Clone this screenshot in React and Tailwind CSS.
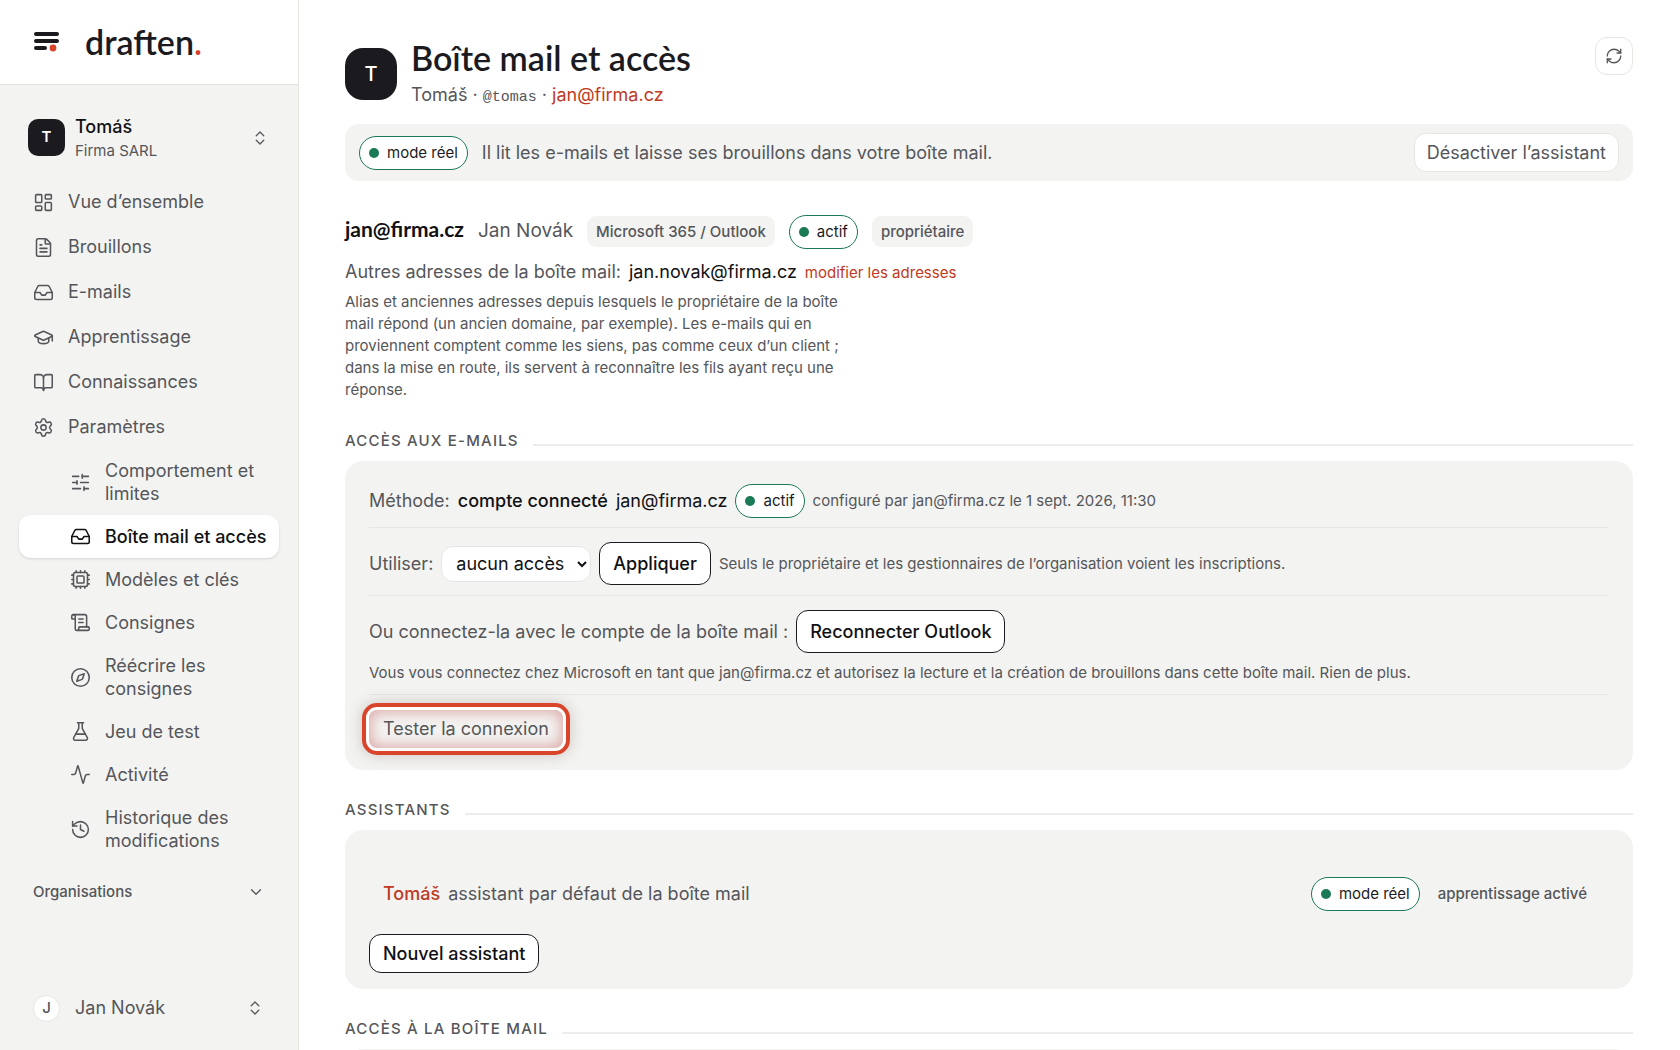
import {
  Activity,
  BookOpen,
  ChevronDown,
  ChevronsUpDown,
  Compass,
  Cpu,
  FileText,
  FlaskConical,
  GraduationCap,
  History,
  Inbox,
  LayoutDashboard,
  RefreshCw,
  ScrollText,
  Settings,
  SlidersHorizontal,
} from "lucide-react"

const mainLinks = [
  { label: "Vue d’ensemble", icon: LayoutDashboard },
  { label: "Brouillons", icon: FileText },
  { label: "E-mails", icon: Inbox },
  { label: "Apprentissage", icon: GraduationCap },
  { label: "Connaissances", icon: BookOpen },
  { label: "Paramètres", icon: Settings },
]

const settingsLinks = [
  { label: "Comportement et limites", icon: SlidersHorizontal },
  { label: "Boîte mail et accès", icon: Inbox, active: true },
  { label: "Modèles et clés", icon: Cpu },
  { label: "Consignes", icon: ScrollText },
  { label: "Réécrire les consignes", icon: Compass },
  { label: "Jeu de test", icon: FlaskConical },
  { label: "Activité", icon: Activity },
  { label: "Historique des modifications", icon: History },
]

function Logo() {
  return (
    <a href="#" className="flex items-center gap-[25px]">
      <svg width="26" height="21" viewBox="0 0 26 21" aria-hidden="true">
        <rect x="0" y="0" width="25" height="4" rx="2" fill="#1b1b1f" />
        <rect x="0" y="7" width="25" height="4" rx="2" fill="#1b1b1f" />
        <rect x="0" y="14" width="13" height="4" rx="2" fill="#1b1b1f" />
        <circle cx="19" cy="16" r="3.4" fill="#d9442b" />
      </svg>
      <span className="font-[Lato,sans-serif] text-[34px] leading-10 font-semibold text-[#1b1b1f]">
        draften<span className="text-[#d9442b]">.</span>
      </span>
    </a>
  )
}

function StatusBadge({ children }) {
  return (
    <span className="inline-flex items-center gap-2 rounded-full border border-[#1a7a56] bg-white px-[9px] py-[5px] text-[15px] leading-[22px] text-[#1b1b1f]">
      <span className="size-[10px] rounded-full bg-[#1a7a56]" />
      {children}
    </span>
  )
}

function Tag({ children }) {
  return (
    <span className="rounded-[9px] bg-[#f3f3f1] px-[9px] py-[5px] text-[15px] leading-[21px] font-medium text-[#55565a]">
      {children}
    </span>
  )
}

function SectionTitle({ children }) {
  return (
    <div className="mt-[30px] mb-[10px] flex items-baseline gap-[14px]">
      <h2 className="text-[15px] leading-5 font-medium tracking-[0.08em] text-[#55565a] uppercase">{children}</h2>
      <span className="h-[2px] flex-1 bg-[#ececea]" />
    </div>
  )
}

function Sidebar() {
  return (
    <aside className="flex w-[299px] shrink-0 flex-col border-r border-[#e6e6e3] bg-[#f3f3f1]">
      <div className="flex h-[85px] items-center border-b border-[#e2e2df] bg-white px-[34px]">
        <Logo />
      </div>

      <button type="button" className="mt-[27px] flex items-center gap-[10px] pr-[29px] pl-7 text-left">
        <span className="flex size-[37px] items-center justify-center rounded-[10px] bg-[#1b1b1f] text-[15px] font-semibold text-white">
          T
        </span>
        <span className="flex-1 pt-[3px]">
          <span className="block text-[18px] leading-6 font-medium text-[#111113]">Tomáš</span>
          <span className="block text-[15px] leading-6 text-[#55565a]">Firma SARL</span>
        </span>
        <ChevronsUpDown size={18} strokeWidth={1.75} className="text-[#55565a]" />
      </button>

      <nav className="mt-[17px] px-[19px]">
        <div className="flex flex-col gap-px">
          {mainLinks.map(({ label, icon: Icon }) => (
            <a
              key={label}
              href="#"
              className="flex items-center gap-[14px] px-[14px] py-[10px] text-[18px] leading-6 text-[#55565a]"
            >
              <Icon size={21} strokeWidth={1.75} className="shrink-0" />
              {label}
            </a>
          ))}
        </div>
        <div className="flex flex-col">
          {settingsLinks.map(({ label, icon: Icon, active }) => (
            <a
              key={label}
              href="#"
              className={
                active
                  ? "flex items-center gap-[14px] rounded-[12px] bg-white py-[10px] pr-2 pl-[51px] text-[18px] leading-[23px] font-medium text-[#111113] shadow-sm"
                  : "flex items-center gap-[14px] py-[10px] pr-2 pl-[51px] text-[18px] leading-[23px] text-[#55565a]"
              }
            >
              <Icon size={21} strokeWidth={1.75} className="shrink-0" />
              {label}
            </a>
          ))}
        </div>
      </nav>

      <button
        type="button"
        className="mt-[18px] flex items-center justify-between pr-[33px] pl-[33px] text-[15px] leading-6 font-medium text-[#55565a]"
      >
        Organisations
        <ChevronDown size={18} strokeWidth={1.75} />
      </button>

      <button
        type="button"
        className="mt-auto mb-7 flex items-center pr-[34px] pl-[33px] text-left text-[18px] leading-7 text-[#55565a]"
      >
        <span className="flex size-[27px] items-center justify-center rounded-full border border-[#e6e6e3] bg-white text-[15px] font-medium">
          J
        </span>
        <span className="ml-[15px] flex-1">Jan Novák</span>
        <ChevronsUpDown size={18} strokeWidth={1.75} />
      </button>
    </aside>
  )
}

function MailAccessCard() {
  return (
    <div className="rounded-[18px] bg-[#f3f3f1] px-6 pt-[9px] pb-[13px] text-[18px] leading-[26px] text-[#55565a]">
      <div className="flex items-center gap-2 border-b border-[#e6e6e3] pt-[14px] pb-[9px]">
        <span>Méthode:</span>
        <span className="font-medium text-[#111113]">compte connecté</span>
        <span className="text-[#111113]">jan@firma.cz</span>
        <StatusBadge>actif</StatusBadge>
        <span className="text-[15px]">configuré par jan@firma.cz le 1 sept. 2026, 11:30</span>
      </div>

      <div className="flex items-center gap-2 border-b border-[#e6e6e3] pt-[14px] pb-[10px]">
        <label htmlFor="access">Utiliser:</label>
        <select
          id="access"
          defaultValue="none"
          className="h-9 w-[150px] rounded-[12px] border border-[#e6e6e3] bg-white pl-[10px] text-[18px] text-[#111113]"
        >
          <option value="none">aucun accès</option>
          <option value="account">compte connecté</option>
        </select>
        <button
          type="button"
          className="h-[43px] rounded-[12px] border border-[#1b1b1f] bg-white px-[13px] font-medium text-[#111113]"
        >
          Appliquer
        </button>
        <span className="text-[15px]">
          Seuls le propriétaire et les gestionnaires de l’organisation voient les inscriptions.
        </span>
      </div>

      <div className="border-b border-[#e6e6e3] pt-[14px] pb-[10px]">
        <div className="flex items-center gap-2">
          <span>Ou connectez-la avec le compte de la boîte mail :</span>
          <button
            type="button"
            className="h-[43px] rounded-[12px] border border-[#1b1b1f] bg-white px-[13px] font-medium text-[#111113]"
          >
            Reconnecter Outlook
          </button>
        </div>
        <p className="mt-[9px] text-[15px] leading-[22px]">
          Vous vous connectez chez Microsoft en tant que jan@firma.cz et autorisez la lecture et la création de
          brouillons dans cette boîte mail. Rien de plus.
        </p>
      </div>

      <div className="pt-[15px] pb-[9px]">
        <button
          type="button"
          className="block h-[38px] rounded-[8px] bg-[#f3f3f1] px-[14px] shadow-[inset_0_0_14px_2px_#dba9a7,0_0_0_3px_#ffffff,0_0_0_7px_#d9442b,0_0_14px_8px_#cfcbc7]"
        >
          Tester la connexion
        </button>
      </div>
    </div>
  )
}

function AssistantsCard() {
  return (
    <div className="rounded-[18px] bg-[#f3f3f1] px-6 pt-[47px] pb-4 text-[18px] leading-[26px] text-[#55565a]">
      <div className="flex items-center justify-between pr-[22px] pl-[14px]">
        <div className="flex items-center gap-2">
          <a href="#" className="font-medium text-[#bf3a22]">
            Tomáš
          </a>
          <span>assistant par défaut de la boîte mail</span>
        </div>
        <div className="flex items-center gap-[18px]">
          <StatusBadge>mode réel</StatusBadge>
          <span className="text-[15px] font-medium">apprentissage activé</span>
        </div>
      </div>
      <button
        type="button"
        className="mt-[23px] h-[39px] rounded-[12px] border border-[#1b1b1f] bg-white px-[13px] font-medium text-[#111113]"
      >
        Nouvel assistant
      </button>
    </div>
  )
}

export default function App() {
  return (
    <div className="flex h-screen overflow-hidden bg-white font-[Inter,sans-serif] text-[18px] text-[#55565a]">
      <Sidebar />
      <main className="min-w-0 flex-1 overflow-y-auto pt-[37px] pr-[47px] pl-[46px] [scrollbar-width:none]">
        <header className="flex items-start justify-between">
          <div className="flex items-center gap-[14px]">
            <span className="flex size-[52px] items-center justify-center rounded-[18px] bg-[#1b1b1f] text-[20px] font-medium text-white">
              T
            </span>
            <div>
              <h1 className="font-[Lato,sans-serif] text-[34px] leading-[42px] font-semibold text-[#1b1b1f]">
                Boîte mail et accès
              </h1>
              <p className="leading-[31px]">
                Tomáš · <span className="font-[Liberation_Mono,monospace] text-[15px] leading-none">@tomas</span> ·{" "}
                <a href="#" className="text-[#bf3a22]">
                  jan@firma.cz
                </a>
              </p>
            </div>
          </div>
          <button
            type="button"
            aria-label="Actualiser"
            className="flex size-[38px] items-center justify-center rounded-[12px] border border-[#e6e6e3] bg-white"
          >
            <RefreshCw size={18} strokeWidth={1.75} />
          </button>
        </header>

        <div className="mt-[14px] flex items-center gap-[14px] rounded-[14px] bg-[#f3f3f1] px-[14px] py-[9px]">
          <StatusBadge>mode réel</StatusBadge>
          <span className="flex-1">Il lit les e-mails et laisse ses brouillons dans votre boîte mail.</span>
          <button type="button" className="h-[39px] rounded-[12px] border border-[#e6e6e3] bg-white px-3">
            Désactiver l’assistant
          </button>
        </div>

        <section className="mt-[34px]">
          <div className="flex items-baseline gap-[14px]">
            <strong className="font-[Lato,sans-serif] text-[21px] leading-7 font-bold text-[#111113]">
              jan@firma.cz
            </strong>
            <span className="text-[19px]">Jan Novák</span>
            <Tag>Microsoft 365 / Outlook</Tag>
            <StatusBadge>actif</StatusBadge>
            <Tag>propriétaire</Tag>
          </div>
          <div className="mt-[10px] flex items-baseline gap-2 leading-[26px]">
            <span>Autres adresses de la boîte mail:</span>
            <span className="text-[#111113]">jan.novak@firma.cz</span>
            <a href="#" className="text-[15px] text-[#bf3a22]">
              modifier les adresses
            </a>
          </div>
          <p className="mt-[5px] max-w-[510px] text-[15px] leading-[22px]">
            Alias et anciennes adresses depuis lesquels le propriétaire de la boîte mail répond (un ancien domaine,
            par exemple). Les e-mails qui en proviennent comptent comme les siens, pas comme ceux d’un client ; dans
            la mise en route, ils servent à reconnaître les fils ayant reçu une réponse.
          </p>
        </section>

        <SectionTitle>Accès aux e-mails</SectionTitle>
        <MailAccessCard />

        <SectionTitle>Assistants</SectionTitle>
        <AssistantsCard />

        <SectionTitle>Accès à la boîte mail</SectionTitle>
        <div className="h-24 rounded-[18px] bg-[#f3f3f1]" />
      </main>
    </div>
  )
}
